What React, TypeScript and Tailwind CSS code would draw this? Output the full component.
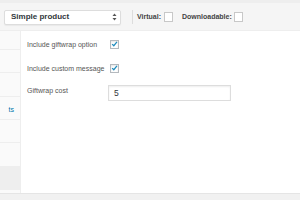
import React from "react";

function Check() {
  return (
    <div className="w-[9px] h-[9px] border border-[#b4b9be] bg-white shadow-[inset_0_1px_2px_rgba(0,0,0,0.1)] flex items-center justify-center">
      <svg width="8" height="8" viewBox="0 0 8 8">
        <path d="M1.3 4.2 L3.2 6 L6.8 1.6" fill="none" stroke="#1e8cbe" strokeWidth="1.4" />
      </svg>
    </div>
  );
}

function EmptyBox() {
  return <div className="w-[9px] h-[10px] border border-[#c8c8c8] bg-white" />;
}

export default function App() {
  const tabs = [
    { h: "h-[19px]", text: "", bg: "" },
    { h: "h-[23px]", text: "", bg: "" },
    { h: "h-[24px]", text: "", bg: "" },
    { h: "h-[23px]", text: "ts", bg: "" },
    { h: "h-[23px]", text: "", bg: "" },
    { h: "h-[24px]", text: "", bg: "" },
    { h: "h-[23px]", text: "", bg: "bg-[#eeeeee]" },
  ];
  return (
    <div className="w-[300px] h-[200px] overflow-hidden bg-white flex flex-col" style={{ fontFamily: '"Liberation Sans", Arial, sans-serif' }}>
      <div className="h-[31px] shrink-0 bg-[#f5f5f5] border-t-[3px] border-[#eeeeee] border-b border-b-[#eeeeee] flex items-center">
        <div className="ml-[4px] mt-[1px] w-[117px] h-[15px] bg-white border border-[#dddddd] rounded-[2px] shadow-[0_1px_1px_rgba(0,0,0,0.05)] flex items-center justify-between pl-[6px] pr-[3px]">
          <span className="text-[8px] font-bold text-[#32373c] leading-none">Simple product</span>
          <svg width="5" height="8" viewBox="0 0 5 8">
            <path d="M2.5 0.5 L4.5 3 L0.5 3 Z" fill="#555" />
            <path d="M2.5 7.5 L4.5 5 L0.5 5 Z" fill="#555" />
          </svg>
        </div>
        <div className="ml-[11px] h-[14px] border-l border-[#dddddd]" />
        <span className="ml-[4px] text-[7px] font-bold text-[#444] leading-none">Virtual:</span>
        <div className="ml-[3px]"><EmptyBox /></div>
        <span className="ml-[9px] text-[7px] font-bold text-[#444] leading-none">Downloadable:</span>
        <div className="ml-[2px]"><EmptyBox /></div>
      </div>
      <div className="flex-1 flex">
        <div className="w-[21px] shrink-0 bg-[#fafafa] border-r border-[#eeeeee] flex flex-col">
          {tabs.map((t, i) => (
            <div key={i} className={`${t.h} ${t.bg} border-b border-[#eeeeee] flex items-center justify-end pr-[6px]`}>
              <span className="text-[7px] text-[#0073aa] leading-none mt-[3px]">{t.text}</span>
            </div>
          ))}
        </div>
        <div className="flex-1 pl-[6px] pt-[8px] flex flex-col">
          <div className="flex items-center h-[10px]">
            <span className="w-[83px] text-[7px] text-[#555] leading-none">Include giftwrap option</span>
            <Check />
          </div>
          <div className="flex items-center h-[10px] mt-[14px]">
            <span className="w-[83px] text-[7px] text-[#555] leading-none">Include custom message</span>
            <Check />
          </div>
          <div className="flex items-center mt-[12px]">
            <span className="w-[81px] text-[7px] text-[#555] leading-none self-start mt-[2px]">Giftwrap cost</span>
            <div className="w-[123px] h-[16px] border border-[#dddddd] shadow-[inset_0_1px_2px_rgba(0,0,0,0.07)] bg-white flex items-center pl-[5px]">
              <span className="text-[8.5px] text-[#32373c] leading-none">5</span>
            </div>
          </div>
        </div>
      </div>
      <div className="h-[7px] shrink-0 bg-[#f1f1f1] border-t border-[#e5e5e5]" />
    </div>
  );
}
